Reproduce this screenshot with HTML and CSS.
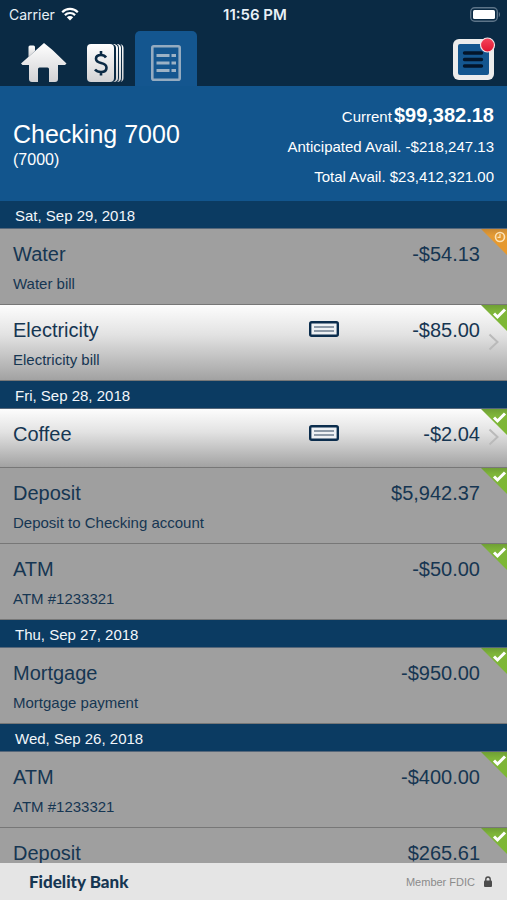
FILE: index.html
```
<!DOCTYPE html>
<html lang="en">
<head>
<meta charset="utf-8">
<meta name="viewport" content="width=device-width, initial-scale=1">
<title>Checking 7000</title>
<link rel="stylesheet" href="styles.css">
</head>
<body>
<svg class="defs" aria-hidden="true">
  <defs>
    <linearGradient id="silver" x1="0" y1="0" x2="0" y2="1"><stop offset="0" stop-color="#fff"/><stop offset="1" stop-color="#d2d2d4"/></linearGradient>
    <linearGradient id="red" x1="0" y1="0" x2="0" y2="1"><stop offset="0" stop-color="#f5455c"/><stop offset="1" stop-color="#e0142f"/></linearGradient>
    <linearGradient id="green" x1="0" y1="0" x2="0" y2="1"><stop offset="0" stop-color="#6f9f35"/><stop offset=".25" stop-color="#7fb53a"/><stop offset="1" stop-color="#7cb832"/></linearGradient>
    <linearGradient id="orange" x1="0" y1="0" x2="0" y2="1"><stop offset="0" stop-color="#c98a35"/><stop offset=".25" stop-color="#e39a34"/><stop offset="1" stop-color="#e8982a"/></linearGradient>
    <symbol id="cleared" viewBox="0 0 26 26"><path fill="url(#green)" d="M0 0h26v26z"/><path d="M13 8.500l3.500 3.500 7.500-7.500" fill="none" stroke="#fff" stroke-width="3"/></symbol>
    <symbol id="pending" viewBox="0 0 26 26"><path fill="url(#orange)" d="M0 0h26v26z"/><circle cx="19" cy="8" r="4.500" fill="none" stroke="#fbe3b8" stroke-width="1.600"/><path d="M19 5v3.300h-2.500" fill="none" stroke="#fbe3b8" stroke-width="1.200"/></symbol>
    <symbol id="check" viewBox="0 0 30 16"><rect x="1.200" y="1.200" width="27.600" height="13.600" rx="1.500" fill="#eef1f4" stroke="#0b2d4d" stroke-width="2.400"/><path d="M5 6h20M5 10h20" stroke="#6d7d8e" stroke-width="1.500"/></symbol>
    <symbol id="chevron" viewBox="0 0 12 20"><path d="M1.500 2.500l8 7.500-8 7.500" fill="none" stroke="#bababa" stroke-width="2"/></symbol>
  </defs>
</svg>

<header class="top">
  <div class="status">
    <span class="carrier">Carrier
      <svg width="18" height="14" viewBox="0 0 18 14" aria-hidden="true"><path d="M1.200 5.200a11 11 0 0 1 15.600 0M3.900 8.100a7.200 7.200 0 0 1 10.200 0" fill="none" stroke="#fff" stroke-width="2.200"/><path d="M9 13.500l-3.200-3.200a4.500 4.500 0 0 1 6.400 0z" fill="#fff"/></svg>
    </span>
    <span class="clock">11:56 PM</span>
    <svg class="battery" width="31" height="15" viewBox="0 0 31 15" aria-hidden="true"><rect x=".7" y=".7" width="26.600" height="13.600" rx="4" fill="none" stroke="#5d7488" stroke-width="1.400"/><rect x="3" y="3" width="22" height="9" rx="1.500" fill="#fff"/><path d="M28.800 5v5c1.600-.5 1.600-4.500 0-5z" fill="#5d7488"/></svg>
  </div>
  <nav class="tabs">
    <button class="tab" aria-label="Home"><svg width="46" height="40" viewBox="0 0 46 40"><path fill="url(#silver)" d="M23 0L0 20.500l1.500 1.500h6.500v14q0 3 3 3h6V26q0-1.500 1.500-1.500h8Q28 24.500 28 26v13h6q3 0 3-3V22h7l1.500-1.500L31.500 7z"/><path fill="url(#silver)" d="M7.500 4q0-1.500 1.500-1.500h3.500Q14 2.500 14 4v4l-6.500 6z"/></svg></button>
    <button class="tab" aria-label="Payments"><svg width="37" height="40" viewBox="0 0 37 40"><rect y="1" width="27" height="38" rx="4" fill="url(#silver)"/><path d="M26 1q3 1 3 4v30q0 3-3 4h1.500q3.500-1 3.500-4V5q0-3-3.500-4zM30 1q2 1 2 4v30q0 3-2 4h1q3-1 3-4V5q0-3-3-4zM33.500 1q1.500 1 1.500 4v30q0 3-1.500 4 3-1 3-4V5q0-3-3-4z" fill="url(#silver)"/><path d="M19 14.500q-1.500-2.500-5-2.500-5 0-5 3.800 0 3 5 4.200 5.500 1.200 5.500 4.700 0 4.300-5.500 4.300-4 0-6-2.500M14 8v4.500M14 28.500v4" fill="none" stroke="#0b2a45" stroke-width="2.600"/></svg></button>
    <button class="tab active" aria-label="Transactions" aria-current="page"><svg width="30" height="36" viewBox="0 0 30 36"><rect x="1.300" y="1.300" width="27.400" height="33.400" rx="1.500" fill="none" stroke="#94abc0" stroke-width="2.600"/><path d="M5.500 10.500h13M20.500 10.500h4.500M5.500 18h13M20.500 18h4.500M5.500 25.500h13M20.500 25.500h4.500" stroke="#9cb2c5" stroke-width="3"/></svg></button>
    <button class="menu" aria-label="Menu, new messages"><svg width="44" height="44" viewBox="0 0 44 44"><rect x="1" y="2" width="41" height="41" rx="6" fill="#ececec"/><rect x="6" y="7" width="31" height="31" rx="2" fill="#14568f"/><path d="M12.500 16h17M12.500 22.500h17M12.500 29h17" stroke="#03152a" stroke-width="3.400" stroke-linecap="round"/><circle cx="35.500" cy="8" r="7" fill="url(#red)" stroke="#f4e4e6" stroke-width="1.200"/></svg></button>
  </nav>
</header>

<section class="account">
  <div>
    <h1>Checking 7000</h1>
    <p class="number">(7000)</p>
  </div>
  <div class="balances">
    <p class="current">Current <b>$99,382.18</b></p>
    <p>Anticipated Avail. -$218,247.13</p>
    <p>Total Avail. $23,412,321.00</p>
  </div>
</section>

<main class="list">
  <h2>Sat, Sep 29, 2018</h2>
  <article class="row"><h3>Water</h3><span class="amount">-$54.13</span><p>Water bill</p><svg class="flag"><use href="#pending"/></svg></article>
  <article class="row link"><h3>Electricity</h3><svg class="check"><use href="#check"/></svg><span class="amount">-$85.00</span><p>Electricity bill</p><svg class="flag"><use href="#cleared"/></svg><svg class="chevron"><use href="#chevron"/></svg></article>
  <h2>Fri, Sep 28, 2018</h2>
  <article class="row link short"><h3>Coffee</h3><svg class="check"><use href="#check"/></svg><span class="amount">-$2.04</span><svg class="flag"><use href="#cleared"/></svg><svg class="chevron"><use href="#chevron"/></svg></article>
  <article class="row"><h3>Deposit</h3><span class="amount">$5,942.37</span><p>Deposit to Checking account</p><svg class="flag"><use href="#cleared"/></svg></article>
  <article class="row"><h3>ATM</h3><span class="amount">-$50.00</span><p>ATM #1233321</p><svg class="flag"><use href="#cleared"/></svg></article>
  <h2>Thu, Sep 27, 2018</h2>
  <article class="row"><h3>Mortgage</h3><span class="amount">-$950.00</span><p>Mortgage payment</p><svg class="flag"><use href="#cleared"/></svg></article>
  <h2>Wed, Sep 26, 2018</h2>
  <article class="row"><h3>ATM</h3><span class="amount">-$400.00</span><p>ATM #1233321</p><svg class="flag"><use href="#cleared"/></svg></article>
  <article class="row short"><h3>Deposit</h3><span class="amount">$265.61</span><svg class="flag"><use href="#cleared"/></svg></article>
</main>

<footer class="footer">
  <strong>Fidelity Bank</strong>
  <span class="fdic">Member FDIC
    <svg width="8" height="11" viewBox="0 0 8 11" aria-hidden="true"><rect y="4.500" width="8" height="6.500" rx="1" fill="#4c4c4c"/><path d="M1.800 5V3.200a2.200 2.200 0 0 1 4.400 0V5" fill="none" stroke="#4c4c4c" stroke-width="1.400"/></svg>
  </span>
</footer>
</body>
</html>
```
FILE: styles.css
```
* { box-sizing: border-box; margin: 0; padding: 0; }

body {
  display: flex;
  flex-direction: column;
  height: 100vh;
  font-family: "Liberation Sans", Arial, sans-serif;
  font-size: 15px;
  color: #163652;
  background: #9f9f9f;
}

svg { display: block; }
.defs { position: absolute; width: 0; height: 0; }
button { border: 0; background: none; cursor: pointer; }

.top { background: #0a2a44; flex: none; }

.status {
  display: grid;
  grid-template-columns: 1fr auto 1fr;
  align-items: center;
  height: 28px;
  padding: 0 6px 0 9px;
  color: #e8f0f6;
  font-family: Inter, sans-serif;
  font-size: 14px;
}
.carrier { display: flex; align-items: center; gap: 6px; }
.clock { font-size: 15px; font-weight: 600; }
.battery { justify-self: end; }

.tabs {
  display: flex;
  align-items: flex-end;
  height: 58px;
  padding: 0 11px 0 21px;
}
.tab { display: flex; justify-content: center; height: 55px; padding-top: 12px; }
.tab + .tab { margin-left: 20px; }
.tab.active {
  width: 62px;
  margin-left: 11px;
  padding-top: 14px;
  border-radius: 5px 5px 0 0;
  background: #14568f;
}
.menu { margin: 0 0 5px auto; }

.account {
  display: flex;
  flex: none;
  justify-content: space-between;
  align-items: center;
  height: 115px;
  padding: 4px 13px 0;
  color: #fff;
  background: #12558d;
}
.account h1 { font-size: 25px; line-height: 28px; font-weight: 400; }
.number { font-size: 16px; line-height: 24px; }
.balances { text-align: right; line-height: 30px; }
.current { display: flex; justify-content: flex-end; align-items: baseline; gap: 2px; }
.current b { font-size: 20px; }

.list { flex: 1; min-height: 0; overflow: hidden; }

h2 {
  height: 28px;
  padding-left: 15px;
  border-bottom: 1px solid #56677a;
  color: #f2f6fa;
  background: #0b3b62;
  font-size: 15px;
  line-height: 29px;
  font-weight: 400;
}

.row {
  position: relative;
  display: grid;
  grid-template-columns: 1fr auto 141px;
  align-content: start;
  row-gap: 6px;
  height: 76px;
  padding: 12px 27px 0 13px;
  border-bottom: 1px solid #777;
  background: #9f9f9f;
}
.row.short { height: 59px; }
.row.link { background: linear-gradient(#fdfdfd, #e2e2e2 40%, #a2a2a2); }
.row h3, .amount { font-size: 20px; line-height: 26px; font-weight: 400; }
.row p { grid-column: 1 / -1; grid-row: 2; line-height: 22px; }
.amount { grid-column: 3; text-align: right; }
.check { width: 30px; height: 16px; margin-top: 4px; }
.flag { position: absolute; top: 0; right: 0; width: 26px; height: 26px; }
.chevron { position: absolute; top: 27px; right: 7px; width: 12px; height: 20px; }
.short .chevron { top: 18px; }

.footer {
  display: flex;
  flex: none;
  justify-content: space-between;
  align-items: center;
  height: 37px;
  padding: 0 15px 0 29px;
  background: #e5e5e5;
}
.footer strong { font-family: Lato, sans-serif; font-size: 17px; font-weight: 900; }
.fdic { display: flex; align-items: center; gap: 9px; color: #8b8b8b; font-size: 11px; }
```
